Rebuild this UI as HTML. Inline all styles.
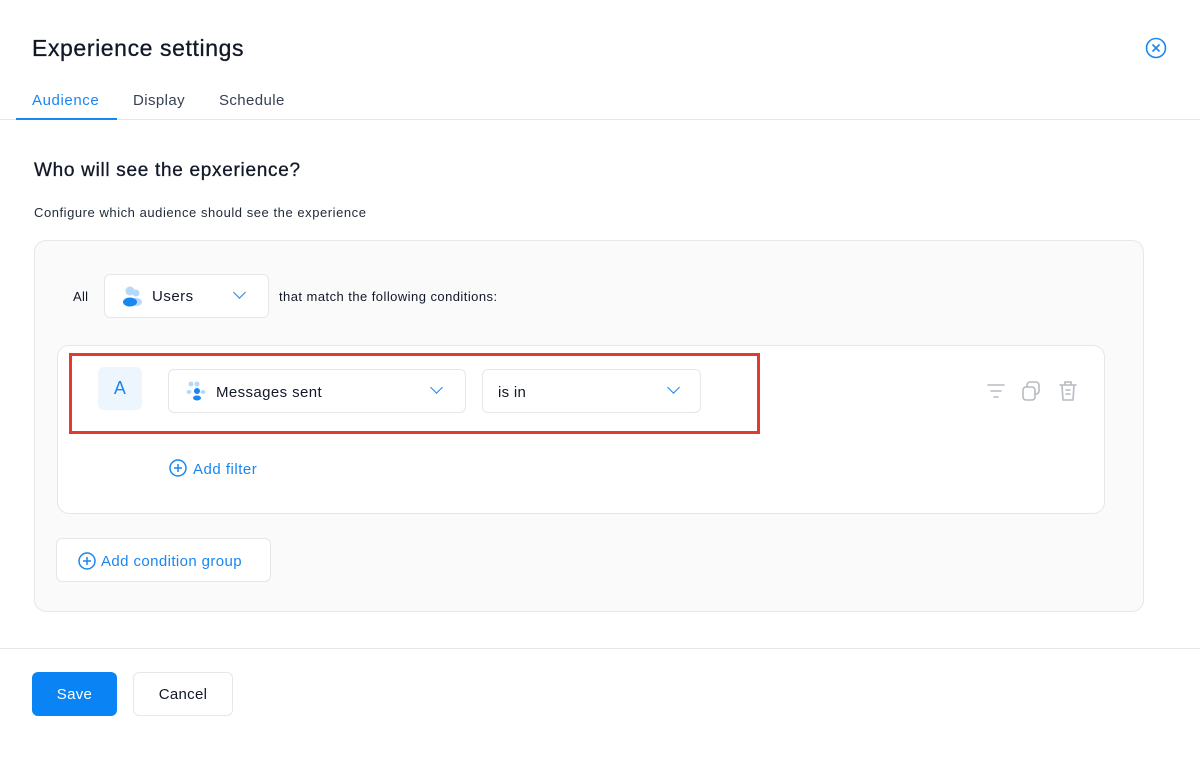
<!DOCTYPE html>
<html><head><meta charset="utf-8"><style>
*{box-sizing:border-box;margin:0;padding:0}
body{width:1200px;height:757px;background:#fff;font-family:"Liberation Sans",sans-serif;color:#111827;position:relative;overflow:hidden;letter-spacing:0.3px}
.a{position:absolute}
.box{position:absolute;background:#fff;border:1px solid #e5e7eb;border-radius:6px}
.chev{position:absolute;width:9px;height:9px;border-right:1.6px solid #1a86f0;border-bottom:1.6px solid #1a86f0;transform:rotate(45deg)}
.blue{color:#1a86f0}
</style></head><body>
<div class="a" style="left:32px;top:35px;font-size:23px;color:#111827;letter-spacing:0.6px;-webkit-text-stroke:0.3px #111827">Experience settings</div>
<svg class="a" style="left:1145px;top:37px" width="22" height="22" viewBox="0 0 22 22"><circle cx="11" cy="11" r="9.5" fill="none" stroke="#1a86f0" stroke-width="1.6"/><path d="M7.5 7.5l7 7M14.5 7.5l-7 7" stroke="#1a86f0" stroke-width="1.6"/></svg>
<div class="a blue" style="left:32px;top:92px;font-size:15px;letter-spacing:0.6px">Audience</div>
<div class="a" style="left:133px;top:92px;font-size:15px;color:#374151;letter-spacing:0.4px">Display</div>
<div class="a" style="left:219px;top:92px;font-size:15px;color:#374151;letter-spacing:0.4px">Schedule</div>
<div class="a" style="left:0;top:119px;width:1200px;height:1px;background:#e5e7eb"></div>
<div class="a" style="left:16px;top:118px;width:101px;height:2px;background:#1a86f0"></div>
<div class="a" style="left:34px;top:160px;font-size:19px;letter-spacing:0.7px;-webkit-text-stroke:0.3px #111827">Who will see the epxerience?</div>
<div class="a" style="left:34px;top:205px;font-size:13px;color:#1f2937;letter-spacing:0.55px">Configure which audience should see the experience</div>
<div class="a" style="left:34px;top:240px;width:1110px;height:372px;background:#fafafa;border:1px solid #e5e7eb;border-radius:12px"></div>
<div class="a" style="left:73px;top:289px;font-size:13px">All</div>
<div class="box" style="left:104px;top:274px;width:165px;height:44px">
<svg class="a" style="left:16px;top:10px" width="24" height="22" viewBox="0 0 24 22"><circle cx="9" cy="6" r="4.5" fill="#b7d7fb"/><circle cx="15" cy="8" r="3.5" fill="#b7d7fb"/><ellipse cx="15" cy="17" rx="6" ry="4" fill="#b7d7fb"/><ellipse cx="9" cy="17" rx="7" ry="4.5" fill="#1a86f0"/></svg>
<div class="a" style="left:47px;top:13px;font-size:15px;letter-spacing:0.5px">Users</div><div class="chev" style="left:130px;top:13px"></div></div>
<div class="a" style="left:279px;top:289px;font-size:13px;letter-spacing:0.45px">that match the following conditions:</div>
<div class="a" style="left:57px;top:345px;width:1048px;height:169px;background:#fff;border:1px solid #e5e7eb;border-radius:12px"></div>
<div class="a" style="left:98px;top:367px;width:44px;height:43px;background:#eef6fd;border-radius:6px;color:#1a86f0;font-size:18px;text-align:center;line-height:43px">A</div>
<div class="box" style="left:168px;top:369px;width:298px;height:44px">
<svg class="a" style="left:16px;top:10px" width="24" height="24" viewBox="0 0 24 24"><circle cx="6" cy="4" r="2.5" fill="#b7d7fb"/><circle cx="12" cy="4" r="2.5" fill="#b7d7fb"/><ellipse cx="4" cy="12" rx="2.5" ry="2" fill="#b7d7fb"/><ellipse cx="18" cy="12" rx="2.5" ry="2" fill="#b7d7fb"/><circle cx="12" cy="11" r="3" fill="#1a86f0"/><ellipse cx="12" cy="18" rx="4" ry="2.5" fill="#1a86f0"/></svg>
<div class="a" style="left:47px;top:14px;font-size:15px;letter-spacing:0.4px">Messages sent</div><div class="chev" style="left:263px;top:13px"></div></div>
<div class="box" style="left:482px;top:369px;width:219px;height:44px"><div class="a" style="left:15px;top:14px;font-size:15px">is in</div><div class="chev" style="left:186px;top:13px"></div></div>
<div class="a" style="left:69px;top:353px;width:691px;height:81px;border:3px solid #e23a2e"></div>
<svg class="a" style="left:985px;top:380px" width="100" height="24" viewBox="0 0 100 24" fill="none" stroke="#b6bac3" stroke-width="1.6" stroke-linecap="round"><path d="M3 5h16M6 11h10M9 17h4"/><rect x="38" y="7" width="12" height="13" rx="3"/><path d="M42 7V5a3 3 0 013-3h6a3 3 0 013 3v6a3 3 0 01-3 3h-1"/><path d="M75 5h16M80 5V2h6v3M77 5l1 15h10l1-15M81 10h4M81 14h4"/></svg>
<svg class="a" style="left:169px;top:459px" width="18" height="18" viewBox="0 0 18 18" fill="none" stroke="#1a86f0" stroke-width="1.5"><circle cx="9" cy="9" r="8"/><path d="M9 5v8M5 9h8"/></svg>
<div class="a blue" style="left:193px;top:461px;font-size:15px;letter-spacing:0.5px">Add filter</div>
<div class="box" style="left:56px;top:538px;width:215px;height:44px">
<svg class="a" style="left:21px;top:13px" width="18" height="18" viewBox="0 0 18 18" fill="none" stroke="#1a86f0" stroke-width="1.5"><circle cx="9" cy="9" r="8"/><path d="M9 5v8M5 9h8"/></svg>
<div class="a blue" style="left:44px;top:14px;font-size:15px;letter-spacing:0.4px">Add condition group</div></div>
<div class="a" style="left:0;top:648px;width:1200px;height:1px;background:#e5e7eb"></div>
<div class="a" style="left:32px;top:672px;width:85px;height:44px;background:#0a84f5;border-radius:6px;color:#fff;font-size:15px;text-align:center;line-height:46px">Save</div>
<div class="box" style="left:133px;top:672px;width:100px;height:44px;font-size:15px;text-align:center;line-height:44px">Cancel</div>
</body></html>
